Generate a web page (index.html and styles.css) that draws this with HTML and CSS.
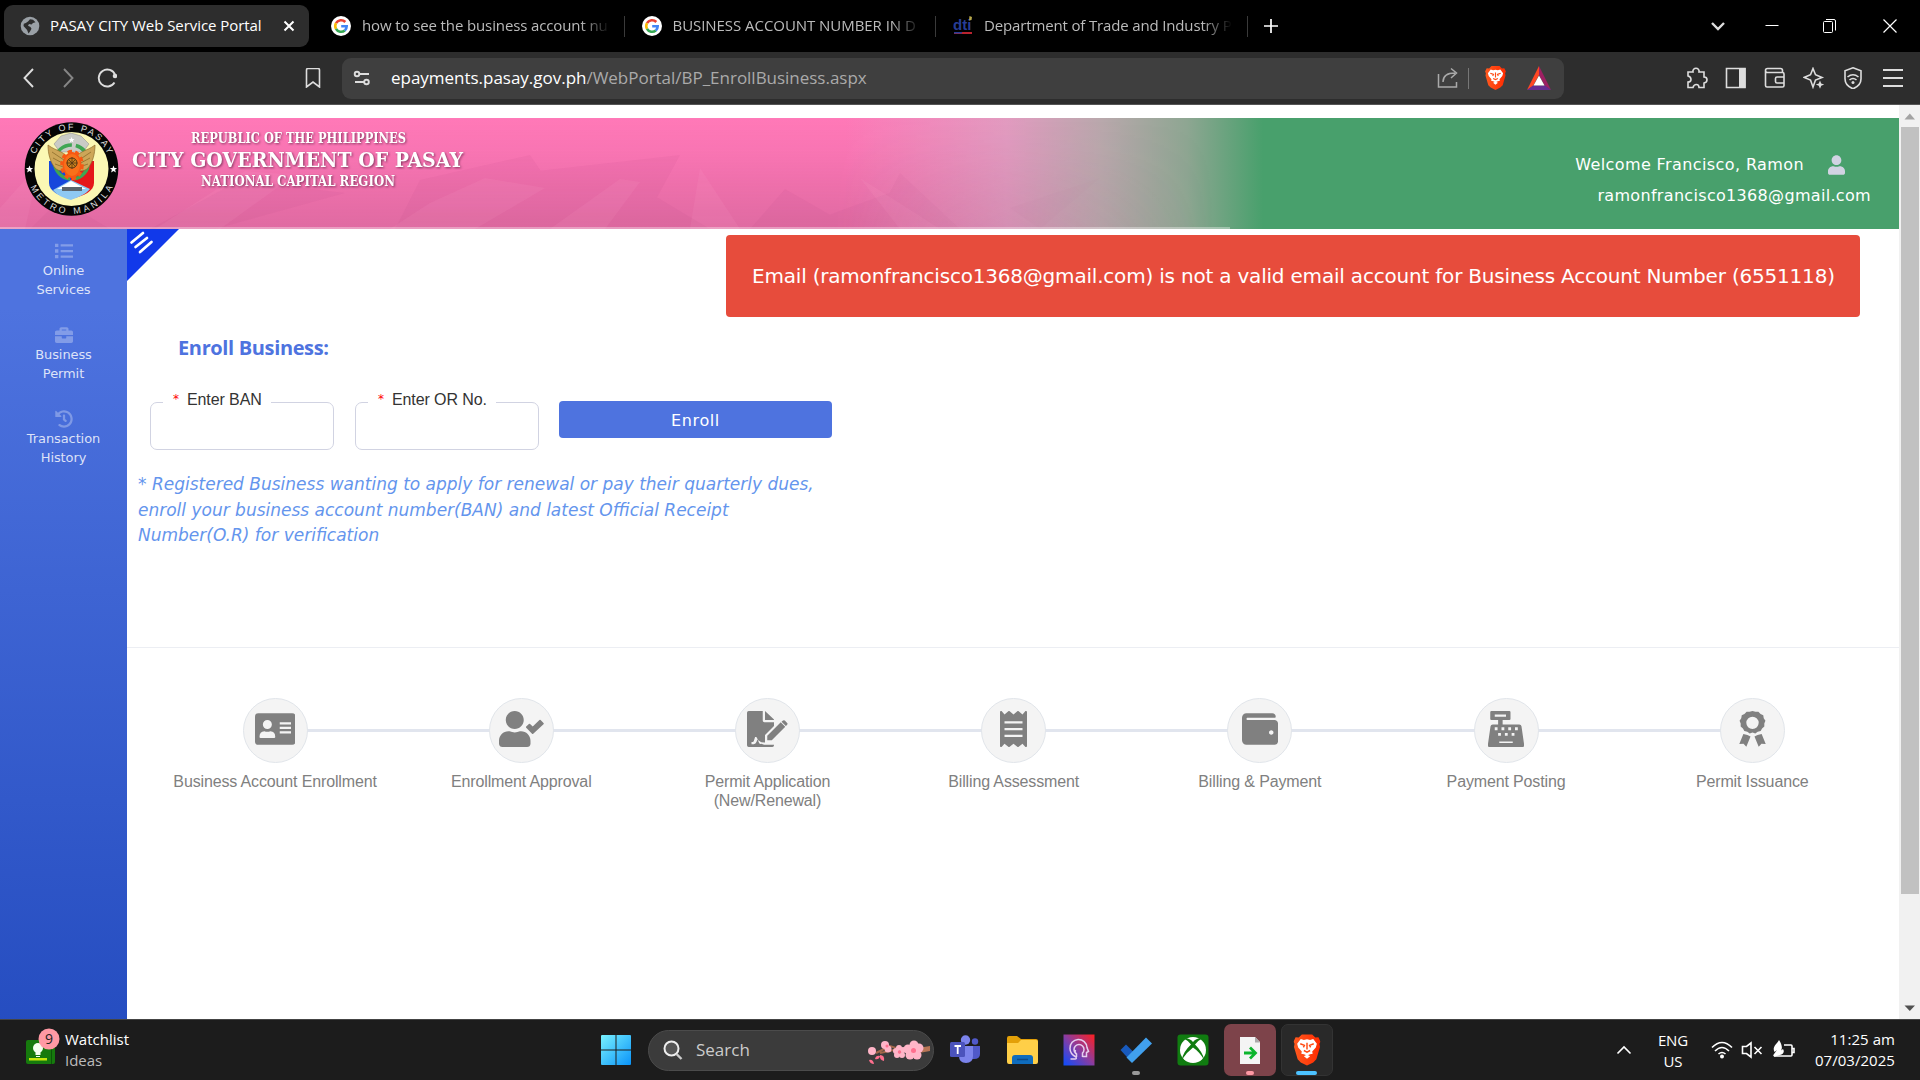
FILE: index.html
```html
<!DOCTYPE html>
<html lang="en">
<head>
<meta charset="utf-8">
<title>PASAY CITY Web Service Portal</title>
<link rel="stylesheet" href="styles.css">
</head>
<body>
<svg class="defs" width="0" height="0" aria-hidden="true">
  <defs>
    <linearGradient id="lion" x1="0" x2="1"><stop offset="0" stop-color="#ff5a1f"/><stop offset="1" stop-color="#ff2a00"/></linearGradient>
    <symbol id="google" viewBox="0 0 20 20">
      <circle cx="10" cy="10" r="10" fill="#fff"/>
      <g fill="none" stroke-width="2.6">
        <path d="M14.300 6A5.800 5.800 0 0 0 5 7.200" stroke="#ea4335"/>
        <path d="M5 7.200a5.800 5.800 0 0 0 0 5.600" stroke="#fbbc05"/>
        <path d="M5 12.800a5.800 5.800 0 0 0 8.800 1.600" stroke="#34a853"/>
        <path d="M13.800 14.400A5.400 5.400 0 0 0 15.700 10.300H10.200" stroke="#4285f4"/>
      </g>
    </symbol>
    <symbol id="brave" viewBox="0 0 26 30">
      <path d="M8 0h10l3 3 3-.3L26 7l-1 2 .5 3-3.500 12-3 3-6 3-6-3-3-3L.5 12 1 9 0 7l2-4.300L5 3z" fill="url(#lion)"/>
      <path d="M7 4.500l3 .8 3-.6 3 .6 3-.8 3.500 4.500-1 3.500-3.500 4 .5 2-2.500.6-3 1.200-3-1.200-2.500-.6.5-2-3.500-4-1-3.500z" fill="#fff"/>
      <path d="M6.500 9l4 1.500-1 2M19.500 9l-4 1.500 1 2M13 8v6.500M10 15.500l3 1.500 3-1.500" fill="none" stroke="#ff4a12" stroke-width="1.400"/>
      <path d="M10 21l3-1.600 3 1.600-3 2.400z" fill="#fff"/>
    </symbol>
  </defs>
</svg>

<header class="tabs">
  <div class="tab tab-active">
    <svg class="fav" viewBox="0 0 20 20"><circle cx="10" cy="10" r="9.300" fill="#9aa0a6"/><path d="M10 3.200l3 .6 2.500 2.500-2.500.8-1.500 1.400-2.500-.5-1 1.800 2.500 1.200 1 1.800-1.500 2.800-1.500 1.800-1.400-3.300L3.500 10l.3-2.300 2-.7L8 5.500z" fill="#2d2d2d"/></svg>
    <span class="tab-title title-1">PASAY CITY Web Service Portal</span>
    <svg class="tab-close" viewBox="0 0 12 12"><path d="M1.500 1.500l9 9M10.500 1.500l-9 9" stroke="#fff" stroke-width="2"/></svg>
  </div>
  <div class="tab tab-idle first-idle">
    <svg class="fav"><use href="#google"/></svg>
    <span class="tab-title fade title-2">how to see the business account nu</span>
  </div>
  <div class="tab tab-idle">
    <svg class="fav"><use href="#google"/></svg>
    <span class="tab-title fade title-3">BUSINESS ACCOUNT NUMBER IN D</span>
  </div>
  <div class="tab tab-idle">
    <svg class="fav" viewBox="0 0 20 20"><text x="0" y="14" class="dti">dti</text><path d="M1 16h18v2H1z" fill="#b9232f"/><path d="M1 16h8v1.500H1z" fill="#273d96"/><path d="M16.500 0l2.500 1-.5 3-2.500.6z" fill="#b8a94c"/></svg>
    <span class="tab-title fade title-4">Department of Trade and Industry P</span>
  </div>
  <svg class="plus" viewBox="0 0 14 14"><path d="M7 0v14M0 7h14" stroke="#fff" stroke-width="1.700"/></svg>
  <div class="win">
    <svg viewBox="0 0 20 20"><path d="M4 7l6 6 6-6" fill="none" stroke="#ddd" stroke-width="2.400"/></svg>
    <svg viewBox="0 0 20 20"><path d="M3.500 9.500h13" stroke="#fff"/></svg>
    <svg viewBox="0 0 20 20"><path d="M3.500 6.500q0-1 1-1h7q1 0 1 1v9q0 1-1 1h-7q-1 0-1-1zM6 3.500h8q1.500 0 1.500 1.500v9.500" fill="none" stroke="#fff"/></svg>
    <svg viewBox="0 0 20 20"><path d="M3.500 3.500l13 13M16.500 3.500l-13 13" stroke="#fff" stroke-width="1.200"/></svg>
  </div>
</header>

<nav class="toolbar">
  <div class="navs">
    <svg viewBox="0 0 20 20"><path d="M14 1L5.500 10l8.500 9" class="ln"/></svg>
    <svg viewBox="0 0 20 20" class="dim"><path d="M6 1l8.500 9L6 19" class="ln"/></svg>
    <svg viewBox="0 0 20 20"><path d="M18.200 7A8.500 8.500 0 1 0 17.500 14.500" class="ln"/><circle cx="18" cy="8" r="2.300" fill="#ddd"/></svg>
  </div>
  <svg class="mark" viewBox="0 0 20 20"><path d="M3.500 2q0-1.500 1.500-1.500h10q1.500 0 1.500 1.500v17L10 14l-6.500 5z" class="ln thin"/></svg>
  <div class="address">
    <svg class="tune" viewBox="0 0 20 20"><path d="M8 6h9M3 14h9" class="ln"/><circle cx="5" cy="6" r="2.300" class="ln"/><circle cx="14.500" cy="14" r="2.300" class="ln"/></svg>
    <span class="url"><b>epayments.pasay.gov.ph</b>/WebPortal/BP_EnrollBusiness.aspx</span>
    <svg class="share" viewBox="0 0 22 22"><path d="M1.500 7v13h18v-5M6 15c0-6 4-9 12-9M14 1.500L19.500 6 14 11" fill="none" stroke="#aaa" stroke-width="1.500"/></svg>
    <i class="rule"></i>
    <svg class="shield"><use href="#brave"/></svg>
    <svg class="bat" viewBox="0 0 24 24"><path d="M12 0L0 24l6-4 6-11z" fill="#ff4724"/><path d="M12 0l12 24-6-4-6-11z" fill="#9e1f63"/><path d="M0 24h24l-6-4.500H6z" fill="#662d91"/><path d="M12 9.500l5.500 10h-11z" fill="#fff"/></svg>
  </div>
  <div class="exts">
    <svg viewBox="0 0 22 22"><path d="M2 5h5c-1-5 7-5 6 0h5v5c4 0 4 5 0 6v4.500h-5c0-4-5-4-6 0H2V15c4 0 4-5 0-6z" class="ln thin"/></svg>
    <svg viewBox="0 0 22 22"><path d="M1.500 1.500h18.500v19H1.500z" class="ln thin"/><path d="M14 1h6.500v20H14z" fill="#ddd"/></svg>
    <svg viewBox="0 0 22 22"><path d="M1.500 3.500q0-2 2-2h13q2 0 2 2v2M1.500 3.500v15q0 1.500 1.500 1.500h15.500q1.500 0 1.500-1.500V7q0-1.500-1.500-1.500h-15q-2 0-2-2M20 10h-7q-1.500 0-1.500 1.500v3q0 1.500 1.500 1.500h7" class="ln thin"/></svg>
    <svg viewBox="0 0 22 22"><path d="M10 1.500l2.500 6.200 6.500 2.700-6.500 2.600L10 20l-2.500-7L1.200 10.400l6.300-2.700z" class="ln thin"/><path d="M17 13.500l1.200 3 3 1-3 1.200-1.200 3-1.200-3-3-1.200 3-1z" fill="#ddd"/></svg>
    <svg viewBox="0 0 22 22"><path d="M11 .8l8 3v8c0 4-3 8-8 10-5-2-8-6-8-10v-8z" class="ln thin"/><path d="M5.500 10q5.500-4.500 11 0M7.500 13q3.500-3 7 0" class="ln thin"/><circle cx="11" cy="15.500" r="1.500" fill="#ddd"/></svg>
    <svg viewBox="0 0 22 22"><path d="M1 3h20M1 11h20M1 19h20" class="ln"/></svg>
  </div>
</nav>

<div class="view">
<div class="page">
  <div class="banner">
    <svg class="banner-art" viewBox="0 0 1899 111" preserveAspectRatio="none">
      <defs>
        <linearGradient id="fade"><stop offset="0" stop-color="#ff79b8"/><stop offset=".445" stop-color="#ff79b8"/><stop offset=".53" stop-color="#e29bc0"/><stop offset=".58" stop-color="#b9a8ac"/><stop offset=".625" stop-color="#8ea692"/><stop offset=".665" stop-color="#48a06c"/><stop offset="1" stop-color="#48a06c"/></linearGradient>
        <linearGradient id="dark" x2="0" y2="1"><stop offset="0" stop-color="#80204f" stop-opacity="0"/><stop offset=".3" stop-color="#80305a" stop-opacity=".05"/><stop offset="1" stop-color="#80405f" stop-opacity=".25"/></linearGradient>
        <linearGradient id="mfade"><stop offset="0" stop-color="#fff"/><stop offset=".44" stop-color="#fff"/><stop offset=".64" stop-color="#000"/></linearGradient>
        <mask id="m"><path d="M0 0h1899v111H0z" fill="url(#mfade)"/></mask>
        <path id="arcTop" d="M32.500 51A39 39 0 0 1 110.500 51"/>
        <path id="arcBottom" d="M26.500 51A45 45 0 0 0 116.500 51"/>
      </defs>
      <path d="M0 0h1899v111H0z" fill="url(#fade)"/>
      <g mask="url(#m)">
        <path d="M0 0h1300v111H0z" fill="url(#dark)"/>
        <g fill="#8e2860" opacity=".05">
          <path d="M150 111L240 62 345 75 215 111zM420 62l110-25 50 74H395zM520 55l160-18-40 74H545zM750 111l35-40 70 40zM560 111l90-36 60 36zM790 111l110-40 60 40zM900 55l60 56H870zM30 111l30-30 50 30zM1010 90l90-30-60 51z"/>
        </g>
        <g fill="#ffb0d8" opacity=".09">
          <path d="M155 111l90-58 50 4-75 54zM430 85l55-25 60 10-70 41h-85zM550 111l70-50 20 3-35 47zM700 50l40 61H690zM860 60l80 51H900zM0 90l40-45-15 66H0z"/>
        </g>
      </g>
      <path d="M0 110h1230" stroke="#fff" stroke-opacity=".7"/>
      <g class="banner-text">
        <text x="191" y="25" font-size="14" textLength="215" lengthAdjust="spacingAndGlyphs">REPUBLIC OF THE PHILIPPINES</text>
        <text x="132" y="48.500" font-size="21" textLength="331" lengthAdjust="spacingAndGlyphs">CITY GOVERNMENT OF PASAY</text>
        <text x="201" y="67.500" font-size="14" textLength="194" lengthAdjust="spacingAndGlyphs">NATIONAL CAPITAL REGION</text>
      </g>
      <circle cx="71.500" cy="51" r="46.800" fill="#050505"/>
      <circle cx="71.500" cy="51" r="37" fill="#fbf8b4"/>
      <text class="seal"><textPath href="#arcTop" startOffset="50%" text-anchor="middle" textLength="92">CITY OF PASAY</textPath></text>
      <text class="seal"><textPath href="#arcBottom" startOffset="50%" text-anchor="middle" textLength="104">METRO MANILA</textPath></text>
      <path id="st" d="M29.500 47.500l1 2.600h2.600l-2 1.700.8 2.700-2.400-1.600-2.400 1.600.8-2.700-2-1.700h2.600z" fill="#fff"/>
      <use href="#st" x="84"/>
      <path d="M54 26l7-8 10-3 10 3 8 8-6 8H60z" fill="#c9cbc6" stroke="#888" stroke-width=".5"/>
      <path d="M49 43h22v38c-12-3-22-8-22-16z" fill="#1747dc"/><path d="M71 43h23v22c0 8-10 13-23 16z" fill="#e5161a"/>
      <path d="M53 72l18-10 19 9c-4 5-11 8-19 11-8-2-14-5-18-10z" fill="#8ec9f3"/><path d="M57 71l14-8 15 8z" fill="#fff"/>
      <circle cx="71.500" cy="44" r="17" fill="none" stroke="#3fa653" stroke-width="3.500" stroke-dasharray="24 4"/>
      <path d="M48 27c9 7 17 5 23 18-1 8-9 10-15 6-6-6-8-16-8-24zM95 27c-9 7-17 5-23 18 1 8 9 10 15 6 6-6 8-16 8-24z" fill="#cda658" stroke="#8d6c2b" stroke-width=".7"/>
      <path d="M52 34l15 10M53 40l13 7M55 46l11 4M91 34L76 44M90 40l-13 7M88 46l-11 4" stroke="#8d6c2b" stroke-width=".8"/>
      <ellipse cx="72" cy="47" rx="9.500" ry="13" fill="#f75813" stroke="#f75813" stroke-width="4.500" stroke-dasharray="4 3"/>
      <ellipse cx="72" cy="47" rx="8" ry="11" fill="#f9701a"/>
      <circle cx="72" cy="45" r="5" fill="#c8801e" stroke="#553613"/><path d="M72 39v12M66.500 45h11M68.500 41.500l7 7M75.500 41.500l-7 7" stroke="#553613" stroke-width=".8"/>
      <path d="M62 69h20v4H62z" fill="#5b656e"/>
      <use href="#st" transform="translate(48 -19) scale(.8)"/>
    </svg>
    <div class="account">
      <div class="who"><span>Welcome Francisco, Ramon</span><svg viewBox="0 0 448 512"><path fill="#d1d3e2" d="M224 256c70.700 0 128-57.300 128-128S294.700 0 224 0 96 57.300 96 128s57.300 128 128 128zm89.600 32h-16.700c-22.200 10.200-46.900 16-72.900 16s-50.600-5.800-72.900-16h-16.700C60.200 288 0 348.200 0 422.400V464c0 26.500 21.500 48 48 48h352c26.500 0 48-21.500 48-48v-41.600c0-74.200-60.200-134.400-134.400-134.400z"/></svg></div>
      <div class="mail">ramonfrancisco1368@gmail.com</div>
    </div>
  </div>

  <div class="body">
    <aside class="sidebar">
      <a class="side-item"><svg viewBox="0 0 512 512"><path d="M0 48h96v96H0zM0 208h96v96H0zM0 368h96v96H0zM160 64h352v64H160zM160 224h352v64H160zM160 384h352v64H160z"/></svg><span>Online<br>Services</span></a>
      <a class="side-item"><svg viewBox="0 0 512 512"><path d="M320 336c0 8.840-7.160 16-16 16h-96c-8.840 0-16-7.160-16-16v-48H0v144c0 25.600 22.400 48 48 48h416c25.600 0 48-22.400 48-48V288H320v48zm144-208h-80V80c0-25.600-22.400-48-48-48H176c-25.600 0-48 22.400-48 48v48H48c-25.600 0-48 22.400-48 48v80h512v-80c0-25.600-22.400-48-48-48zm-144 0H192V96h128v32z"/></svg><span>Business<br>Permit</span></a>
      <a class="side-item"><svg viewBox="0 0 512 512"><path d="M504 255.531c.253 136.640-111.180 248.372-247.820 248.468-59.015.042-113.223-20.530-155.822-54.911-11.077-8.940-11.905-25.541-1.839-35.607l11.267-11.267c8.609-8.609 22.353-9.551 31.891-1.984C173.062 425.135 212.781 440 256 440c101.705 0 184-82.311 184-184 0-101.705-82.311-184-184-184-48.814 0-93.149 18.969-126.068 49.932l50.754 50.754c10.080 10.080 2.941 27.314-11.313 27.314H24c-8.837 0-16-7.163-16-16V38.627c0-14.254 17.234-21.393 27.314-11.314l49.372 49.372C129.209 34.136 189.552 8 256 8c136.810 0 247.747 110.780 248 247.531zm-180.912 78.784l9.823-12.630c8.138-10.463 6.253-25.542-4.210-33.679L288 256.349V152c0-13.255-10.745-24-24-24h-16c-13.255 0-24 10.745-24 24v135.651l65.409 50.874c10.463 8.137 25.541 6.253 33.679-4.210z"/></svg><span>Transaction<br>History</span></a>
    </aside>
    <main class="main">
      <div class="top-row">
        <svg class="corner" viewBox="0 0 52 52"><path d="M0 0h52L0 52z" fill="#1139ea"/><path d="M4.500 13.500L16 4M8.500 18L20 9M13 23l11.500-10" stroke="#fff" stroke-width="2.700" stroke-linecap="round"/></svg>
        <div class="alert">Email (ramonfrancisco1368@gmail.com) is not a valid email account for Business Account Number (6551118)</div>
      </div>
      <h1>Enroll Business:</h1>
      <form class="form">
        <fieldset class="ban"><legend><i>*</i>Enter BAN</legend></fieldset>
        <fieldset class="orno"><legend><i>*</i>Enter OR No.</legend></fieldset>
        <button type="button">Enroll</button>
      </form>
      <p class="note">* Registered Business wanting to apply for renewal or pay their quarterly dues,<br>enroll your business account number(BAN) and latest Official Receipt<br>Number(O.R) for verification</p>
      <ol class="steps">
        <li><span class="dot"><svg viewBox="0 0 576 512"><path fill-rule="evenodd" d="M48 32h480q48 0 48 48v352q0 48-48 48H48q-48 0-48-48V80q0-48 48-48zM176 128a64 64 0 1 0 0 128 64 64 0 1 0 0-128zM64 368q0 16 16 16h192q16 0 16-16 0-75-70-80-42 16-84 0-70 5-70 80zM352 160v32h160v-32zM352 224v32h160v-32zM352 288v32h160v-32z"/></svg></span>Business Account Enrollment</li>
        <li><span class="dot"><svg viewBox="0 0 640 512"><path d="M224 256c70.700 0 128-57.300 128-128S294.700 0 224 0 96 57.300 96 128s57.300 128 128 128zm89.600 32h-16.700c-22.200 10.200-46.900 16-72.900 16s-50.600-5.800-72.900-16h-16.700C60.200 288 0 348.200 0 422.400V464c0 26.500 21.500 48 48 48h352c26.500 0 48-21.500 48-48v-41.600c0-74.200-60.200-134.400-134.400-134.400zM633 171l-41-42q-9-8-17 0L480 222l-38-38q-8-8-17 0l-38 38q-8 8 0 17l83 83q9 8 17 0l146-134q8-8 0-17z"/></svg></span>Enrollment Approval</li>
        <li><span class="dot"><svg viewBox="0 0 576 512"><path d="M24 0h200v136q0 24 24 24h136v55L256 343v105q-55 2-71-14-7-13-20-10l-32-56h-18l-18 60q-4 12-17 12H64v32h32q28-2 40-35l12-35 26 55q12 18 34 7 20 16 80 16h96v8q0 24-24 24H24q-24 0-24-24V24Q0 0 24 0zM256 0l128 122v6H256zM480 159l-192 192v65h64l192-192zM568 167l-30-31q-16-12-31 1l-16 15 61 62 17-16q16-16-1-31z"/></svg></span>Permit Application<br>(New/Renewal)</li>
        <li><span class="dot"><svg viewBox="0 0 384 512"><path fill-rule="evenodd" d="M358.400 3.200L320 48 265.600 3.200a15.900 15.900 0 0 0-19.200 0L192 48 137.600 3.200a15.900 15.900 0 0 0-19.200 0L64 48 25.600 3.200C15-4.700 0 2.800 0 16v480c0 13.200 15 20.700 25.600 12.800L64 464l54.400 44.800a15.900 15.900 0 0 0 19.200 0L192 464l54.400 44.800a15.900 15.900 0 0 0 19.200 0L320 464l38.400 44.800c10.500 7.900 25.600.4 25.600-12.800V16c0-13.200-15-20.700-25.600-12.800zM64 144v32h256v-32zM64 240v32h256v-32zM64 336v32h256v-32z"/></svg></span>Billing Assessment</li>
        <li><span class="dot"><svg viewBox="0 0 512 512"><path d="M461.200 128H80c-8.840 0-16-7.160-16-16s7.160-16 16-16h384c8.840 0 16-7.160 16-16 0-26.510-21.490-48-48-48H64C28.650 32 0 60.650 0 96v320c0 35.350 28.650 64 64 64h397.200c28.020 0 50.800-21.530 50.800-48V176c0-26.470-22.780-48-50.800-48zM416 336c-17.670 0-32-14.330-32-32s14.330-32 32-32 32 14.330 32 32-14.330 32-32 32z"/></svg></span>Billing &amp; Payment</li>
        <li><span class="dot"><svg viewBox="0 0 512 512"><path fill-rule="evenodd" d="M48 0h256q16 0 16 16v96q0 16-16 16H208v64h236q28 0 32 26l36 246v32q0 16-16 16H16q-16 0-16-16v-32l36-246q4-26 32-26h76v-64H48q-16 0-16-16V16Q32 0 48 0zM96 48v32h160V48zM96 232v40h40v-40zM192 232v40h40v-40zM288 232v40h40v-40zM384 232v40h40v-40zM144 312v40h40v-40zM240 312v40h40v-40zM336 312v40h40v-40zM160 432v24h192v-24z"/></svg></span>Payment Posting</li>
        <li><span class="dot"><svg viewBox="0 0 384 512"><path fill-rule="evenodd" d="M192 0l42 12 42-2 31 32 38 20 7 42 24 34-16 40v42l-32 28-20 38-42 10-34 24-40-14-40 14-34-24-42-10-20-38-32-28v-42L8 138l24-34 7-42 38-20 31-32 42 2zM192 80a88 88 0 1 0 0 176 88 88 0 1 0 0-176z"/><path d="M62 326l58 14 44 22-60 146-40-44-60 4zM322 326l-58 14-44 22 60 146 40-44 60 4z"/></svg></span>Permit Issuance</li>
      </ol>
    </main>
  </div>
</div>
<div class="scroll"><svg viewBox="0 0 21 22"><path d="M5.500 14.500L10.800 8.500l5.200 6z" fill="#a3a3a3"/></svg><div class="thumb"></div><svg viewBox="0 0 21 22"><path d="M5.500 8.500L10.800 14l5.200-5.500z" fill="#505050"/></svg></div>
</div>

<footer class="taskbar">
  <div class="widget">
    <svg viewBox="0 0 40 36"><rect x="1" y="12" width="29" height="24" rx="2" fill="#167a0d"/><path d="M26 12h1v24h-1z" fill="#0b5508"/><circle cx="13" cy="20" r="5" fill="#f4fff0"/><path d="M10.500 24h5v3h-5zM11 28h4v1h-4z" fill="#f4fff0"/><path d="M4 30h18v2.500H4z" fill="#c6e80b"/><circle cx="24" cy="11" r="10.500" fill="#ff99a4"/><text x="24" y="16" text-anchor="middle" class="nine">9</text></svg>
    <div><div class="w1">Watchlist</div><div class="w2">Ideas</div></div>
  </div>
  <svg class="start" viewBox="0 0 30 30"><defs><linearGradient id="win" x2="1" y2="1"><stop stop-color="#79f2ff"/><stop offset="1" stop-color="#0a93f8"/></linearGradient></defs><path d="M1 0h13.500v14.500H0V1q0-1 1-1zM15.500 0H29q1 0 1 1v13.500H15.500zM0 15.500h14.500V30H1q-1 0-1-1zM15.500 15.500H30V29q0 1-1 1H15.500z" fill="url(#win)"/></svg>
  <div class="search">
    <svg class="glass" viewBox="0 0 20 20"><circle cx="8.500" cy="8.500" r="7" fill="#555" stroke="#eee" stroke-width="2"/><path d="M13.500 14l5 5" stroke="#ccc" stroke-width="2.400"/></svg>
    <span>Search</span>
    <svg class="blossom" viewBox="0 0 64 28"><path d="M62 10L40 14 22 8 8 15M26 12l-14 3" stroke="#a3674a" stroke-width="2" fill="none"/><path d="M50 10l12-2v5l-11 2z" fill="#b87556"/><g fill="#ffb5c8"><circle cx="4" cy="13" r="4"/><circle cx="17" cy="7" r="4"/><circle cx="20" cy="11" r="3.500"/><circle cx="28" cy="13" r="3"/><circle cx="35" cy="12" r="3"/><circle cx="29" cy="17" r="3"/><circle cx="34" cy="17" r="3"/><circle cx="31" cy="10" r="3"/><circle cx="46" cy="7" r="4.500"/><circle cx="40" cy="11" r="4.500"/><circle cx="42" cy="17" r="4.500"/><circle cx="49" cy="17" r="4.500"/><circle cx="51" cy="10" r="4.500"/></g><g fill="#ff6f8e"><circle cx="45.500" cy="12.500" r="2.500"/><circle cx="31.500" cy="14" r="1.700"/><circle cx="19" cy="8" r="1.500"/><path d="M1 22q4-1 5 4-4 0-5-4zM7 21q1-4 5-3-1 4-5 3zM12 17q5 0 4 6-5-1-4-6z"/></g></svg>
  </div>
  <div class="apps">
    <div class="app"><svg viewBox="0 0 32 32"><circle cx="16.500" cy="6" r="4.700" fill="#7b83eb"/><circle cx="26" cy="7.500" r="3.200" fill="#5059c9"/><path d="M22 12h9v8q0 5-6 5h-3z" fill="#5059c9"/><path d="M10 12h14v10q0 7-7 7-7 0-7-7z" fill="#7b83eb"/><rect x="1" y="8" width="15" height="15" rx="1.500" fill="#4b53bc"/><path d="M5.500 12h6.500M8.700 12v8" stroke="#fff" stroke-width="1.800"/></svg></div>
    <div class="app"><svg viewBox="0 0 32 32"><path d="M1 4q0-2 2-2h8l4 3h15q2 0 2 2v6H1z" fill="#e3a008"/><path d="M1 9h11l3-3h15q2 0 2 2v20q0 2-2 2H3q-2 0-2-2z" fill="#ffcf48"/><path d="M6 30v-6q0-3 3-3h15q3 0 3 3v6z" fill="#0f6cbd"/><path d="M11 25.500h11" stroke="#0b4a8a" stroke-width="1.500"/></svg></div>
    <div class="app"><svg viewBox="0 0 32 32"><defs><linearGradient id="ai" y1="1" x2="1" y2="0"><stop stop-color="#0a4dff"/><stop offset=".5" stop-color="#8a3ca0"/><stop offset="1" stop-color="#ff1f1f"/></linearGradient></defs><path d="M.5.5h31v31H.5z" fill="url(#ai)"/><path d="M7.500 25h4.500q2 0 1-2-6-3-6-8.500a8.500 8.500 0 0 1 17-1l1.500 4-2 1v4h-4M12.500 19a5 5 0 1 1 7 0v4M13.500 23v-3a3 3 0 0 1-1-4" fill="none" stroke="#e5cff0" stroke-width="1.500"/></svg></div>
    <div class="app under-gray"><svg viewBox="0 0 32 32"><path d="M.5 16L6 10.500l8 8-3 9z" fill="#185abd"/><path d="M12 29l-5.500-5.500L26 3.500l6 6z" fill="#41a0ee"/></svg></div>
    <div class="app"><svg viewBox="0 0 32 32"><rect x=".5" y=".5" width="31" height="31" rx="3" fill="#107c10"/><circle cx="16" cy="16" r="13" fill="#fff"/><path d="M7 4.500q5-1 9 3.500 4-4.500 9-3.500-4 2-7 6 8 8 9 15-5-8-11-12Q10 18 5 25.500 6 18 14 10.500q-3-4-7-6z" fill="#107c10"/></svg></div>
    <div class="app app-red"><svg viewBox="0 0 32 32"><path d="M6 3h15l5 5v22H6z" fill="#f4f4f4"/><path d="M21 3v5.500h5z" fill="#aaa"/><path d="M10 19h11M16 13.500l5.500 5.500-5.500 5.500" fill="none" stroke="#0cb52d" stroke-width="2.800"/></svg></div>
    <div class="app app-on"><svg viewBox="0 0 32 32"><use href="#brave" x="2.500" y="0" width="27" height="32"/></svg></div>
  </div>
  <div class="tray">
    <svg class="up" viewBox="0 0 16 16"><path d="M1.500 11.500L8 5l6.500 6.500" class="tl"/></svg>
    <div class="lang">ENG<br>US</div>
    <svg class="wifi" viewBox="0 0 22 20"><path d="M1 7.500q10-10 20 0M4 11q7-7 14 0M7.500 14q3.500-3 7 0" class="tl"/><circle cx="11" cy="16.500" r="2" fill="#fff"/></svg>
    <svg class="spk" viewBox="0 0 22 20"><path d="M1.500 6.500h4L10 3v14l-4.500-3.500h-4z" class="tl"/><path d="M13.500 7l7 7M20.500 7l-7 7" class="tl"/></svg>
    <svg class="batt" viewBox="0 0 24 20"><path d="M12 5h7q1 0 1 1v9q0 1-1 1H2M20 8.500h2v4h-2" class="tl"/><path d="M2.500 12C0 7 4 5 7 0c4 6 4 11-1 12.500l5-3.500c2 3 0 5.500-3 6L3 16.500q-3 0-1-2.500l3-4" fill="#fff"/></svg>
    <div class="clock"><div class="t1">11:25 am</div><div class="t2">07/03/2025</div></div>
  </div>
</footer>
</body>
</html>
```
FILE: styles.css
```css
* { box-sizing: border-box; }
body { margin: 0; width: 1920px; height: 1080px; overflow: hidden; display: flex; flex-direction: column; background: #fff; font-family: "Open Sans", "Noto Sans", sans-serif; }
svg { display: block; flex: none; }
.defs { position: absolute; }

/* window tabs */
.tabs { height: 52px; flex: none; background: #000; display: flex; align-items: center; padding-left: 4px; }
.tab { display: flex; align-items: center; height: 42px; white-space: nowrap; font-size: 15px; }
.tab-active { width: 305px; background: #2d2d2d; border-radius: 9px; padding: 0 14px 0 16px; color: #fff; }
.fav { width: 20px; height: 20px; margin-right: 11px; }
.tab-title { flex: 1; padding-bottom: 2px; }
.tab-close { width: 12px; height: 12px; }
.tab-idle { width: 311.500px; color: #bbb; padding: 0 15px 0 16px; position: relative; }
.tab-idle:nth-child(2) { margin-left: 5px; padding-left: 17px; }
.tab-idle::after { content: ""; position: absolute; right: 1px; top: 11px; height: 21px; width: 1px; background: #3a3a3a; }
.fade { flex: none; width: 248px; -webkit-mask-image: linear-gradient(90deg, #000 88%, transparent); mask-image: linear-gradient(90deg, #000 88%, transparent); }
.title-1 { letter-spacing: -.06px; margin-left: -1px; }
.title-2 { letter-spacing: -.12px; }
.title-3 { letter-spacing: -.05px; }
.title-4 { letter-spacing: -.15px; }
.dti { font: bold 15px "Liberation Sans", sans-serif; fill: #273d96; }
.plus { width: 14px; height: 14px; margin-left: 15px; }
.win { margin-left: auto; display: grid; grid-template-columns: 50px 57px 60px 60px; justify-items: center; }
.win svg { width: 20px; height: 20px; }

/* browser toolbar */
.toolbar { height: 53px; flex: none; background: #2d2d2d; border-bottom: 1px solid #555; display: flex; align-items: center; }
.ln { fill: none; stroke: #ddd; stroke-width: 1.900; }
.thin { stroke-width: 1.600; }
.dim { opacity: .5; }
.navs { display: flex; gap: 19px; margin-left: 19px; }
.navs svg, .mark, .tune { width: 20px; height: 20px; }
.mark { margin: 0 19px 0 186px; }
.address { width: 1222px; height: 41px; border-radius: 9px; background: #3f3f3f; display: flex; align-items: center; padding: 0 13px 0 10px; }
.url { margin-left: 19px; font-size: 17px; color: #aaa; letter-spacing: -.02px; flex: 1; padding-bottom: 2px; }
.url b { font-weight: 400; color: #fff; }
.share { width: 22px; height: 22px; }
.rule { width: 1px; height: 21px; background: #777; margin: 0 16px 0 9px; }
.shield { width: 21px; height: 24px; margin-right: 21px; }
.bat { width: 24px; height: 24px; }
.exts { margin-left: auto; display: flex; gap: 17.200px; padding-right: 16.500px; }
.exts svg { width: 22px; height: 22px; }

/* page viewport */
.view { flex: 1; display: flex; min-height: 0; }
.page { width: 1899px; padding-top: 13px; display: flex; flex-direction: column; }
.banner { height: 111px; position: relative; display: flex; justify-content: flex-end; background: #48a06c; }
.banner-art { position: absolute; inset: 0; width: 1899px; height: 111px; }
.banner-text { fill: #fff; font-family: "DejaVu Serif Condensed", "DejaVu Serif", serif; font-weight: bold; filter: drop-shadow(1px 1px 1px rgba(70, 20, 50, .65)); }
.seal { fill: #ddd; font: 9px "Liberation Sans", sans-serif; }
.account { position: relative; padding: 31px 28px 0 0; color: #fff; font: 16px/31px "DejaVu Sans", sans-serif; display: flex; flex-direction: column; align-items: flex-end; }
.who { display: flex; align-items: center; padding-right: 26px; letter-spacing: .4px; }
.who span { padding-top: 1px; line-height: 30px; }
.who svg { width: 17px; height: 20px; margin-left: 24px; }
.mail { letter-spacing: .32px; line-height: 32px; }

.body { flex: 1; display: flex; }
.sidebar { width: 127px; background: linear-gradient(180deg, #4e73df 10%, #224abe 108%); }
.side-item { display: flex; flex-direction: column; align-items: center; height: 84px; padding-top: 13px; color: rgba(255, 255, 255, .82); font: 13px/19px "DejaVu Sans", sans-serif; letter-spacing: -.1px; text-align: center; }
.side-item svg { width: 18px; height: 18px; margin-bottom: 1px; fill: rgba(255, 255, 255, .3); }
.main { width: 1772px; display: flex; flex-direction: column; }
.top-row { display: flex; justify-content: space-between; padding-right: 39px; height: 88px; }
.corner { width: 52px; height: 52px; }
.alert { width: 1134px; height: 82px; margin-top: 6px; background: #e74c3c; border-radius: 4px; color: #fff; font: 20px/82px "DejaVu Sans", sans-serif; padding-left: 26px; white-space: nowrap; letter-spacing: -.2px; }
h1 { margin: 16px 0 0 51px; font-size: 20px; line-height: 30px; color: #4e73df; letter-spacing: -.36px; }
.form { display: flex; margin: 28px 0 0 23px; height: 60px; }
fieldset { width: 184px; height: 59px; margin: 0 21px 0 0; padding: 0 0 0 12px; border: 1px solid #d1d3e2; border-radius: 7px; min-width: 0; }
legend { padding: 0 0 4px 10px; font: 16px/18px "Liberation Sans", sans-serif; letter-spacing: -.1px; color: #333; white-space: nowrap; }
legend i { display: inline-block; width: 14px; font: 12px/12px "DejaVu Sans", sans-serif; color: #f00; vertical-align: 2px; }
.ban legend { width: 108px; }
.orno legend { width: 128px; }
.orno { margin-right: 20px; }
button { width: 273px; height: 37px; margin-top: 10px; border: 0; border-radius: 4px; background: #4e73df; color: #fff; font: 16px "DejaVu Sans", sans-serif; letter-spacing: .6px; padding: 2px 0 0; }
.note { margin: 21px 0 0 11px; height: 77px; font: italic 17px/25.500px "DejaVu Sans", sans-serif; color: #6495ed; white-space: nowrap; }
.steps { list-style: none; margin: 98px 0 0; border-top: 1px solid #eceef3; padding: 50px 23px 0 25px; display: grid; grid-template-columns: repeat(7, 246.200px); }
.steps li { position: relative; display: flex; flex-direction: column; align-items: center; text-align: center; font: 16px/19px "Liberation Sans", sans-serif; letter-spacing: -.14px; color: #808080; white-space: nowrap; }
.steps li + li::before { content: ""; position: absolute; top: 31px; right: 50%; width: 100%; height: 3px; background: #e1e5ee; }
.dot { position: relative; z-index: 1; width: 65px; height: 65px; border: 1px solid #e1e5ea; border-radius: 50%; background: #f4f4f4; margin-bottom: 9px; display: flex; align-items: center; justify-content: center; padding-bottom: 3px; }
.dot svg { height: 36px; fill: #808080; }
.scroll { width: 21px; background: #f1f1f1; display: flex; flex-direction: column; }
.scroll svg { width: 21px; height: 22px; }
.thumb { width: 18px; height: 767px; margin: 0 0 103px 2px; background: #c1c1c1; }

/* taskbar */
.taskbar { height: 61px; flex: none; background: #1c1c1c; border-top: 1px solid #444; display: flex; color: #fff; align-items: center; }
.widget { width: 601px; display: flex; padding-left: 25px; align-items: center; }
.widget svg { width: 40px; height: 36px; margin: -9px 0 0 0; }
.nine { font: 14px "Open Sans", sans-serif; fill: #222; }
.w1, .w2 { font-size: 15px; line-height: 21px; letter-spacing: 0; }
.w2 { color: #bbb; }
.start { width: 30px; height: 30px; }
.search { width: 286px; height: 41px; margin-left: 17px; border-radius: 21px; background: #3b3b3b; border: 1px solid #4b4b4b; display: flex; align-items: center; padding: 0 1px 0 14px; font-size: 17px; color: #ccc; }
.glass { width: 20px; height: 20px; margin-right: 13px; }
.search span { flex: 1; padding-bottom: 2px; }
.blossom { width: 64px; height: 28px; margin-top: 4px; }
.apps { display: flex; margin-left: 2px; }
.app { width: 52px; height: 52px; margin: 0 2.500px; display: flex; align-items: center; justify-content: center; position: relative; border-radius: 7px; }
.app svg { width: 32px; height: 32px; }
.app-red { background: #7d434a; }
.app-on { background: #292929; border: 1px solid #333; }
.under-gray::after, .app-red::after, .app-on::after { content: ""; position: absolute; bottom: 1px; left: 22px; width: 8px; height: 4px; border-radius: 2px; background: #999; }
.app-red::after { background: #ff99a4; }
.app-on::after { left: 14px; width: 21px; bottom: 0; background: #4cc2ff; }
.tray { margin-left: auto; display: flex; align-items: center; padding-right: 25px; font-size: 15px; line-height: 21px; }
.tl { fill: none; stroke: #fff; stroke-width: 1.600; }
.up { width: 16px; height: 16px; }
.lang { width: 50px; margin: 1px 13px 0 16px; text-align: center; letter-spacing: -.1px; }
.wifi { width: 22px; height: 20px; }
.spk { width: 22px; height: 20px; margin-left: 8px; }
.batt { width: 24px; height: 20px; margin-left: 9px; }
.clock { width: 90px; text-align: right; letter-spacing: .05px; margin-left: 9px; }
```
